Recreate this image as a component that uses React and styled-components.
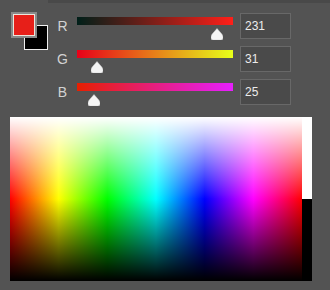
import React from "react";
import styled, { createGlobalStyle } from "styled-components";

const Global = createGlobalStyle`
  html, body { margin: 0; padding: 0; background: #535353; }
  body { font-family: "Liberation Sans", Arial, sans-serif; }
`;

const Page = styled.div`
  width: 330px;
  height: 290px;
  background: #535353;
  overflow: hidden;
`;

const TopBand = styled.div`
  height: 3px;
  margin-left: 48px;
  background: #494949;
`;

const Controls = styled.div`
  display: flex;
  align-items: flex-start;
  margin-top: 9px;
  padding-left: 11px;
`;

const SwatchStack = styled.div`
  position: relative;
  width: 37px;
  height: 38px;
  flex: none;
`;

const BackSwatch = styled.div`
  position: absolute;
  left: 13px;
  top: 13px;
  width: 24px;
  height: 25px;
  box-sizing: border-box;
  border: 1px solid #f0f0f0;
  background: #000;
`;

const FrontSwatch = styled.div`
  position: absolute;
  left: 0;
  top: 0;
  width: 26px;
  height: 26px;
  box-sizing: border-box;
  border: 2px solid #8a8a8a;
  box-shadow: inset 0 0 0 1px #ece6dc;
  background: ${(p) => p.$color};
`;

const Rows = styled.div`
  display: flex;
  flex-direction: column;
  gap: 7px;
  margin-top: 1px;
`;

const Row = styled.div`
  display: flex;
  height: 26px;
`;

const Label = styled.div`
  width: 29px;
  display: flex;
  align-items: center;
  justify-content: center;
  font-size: 14px;
  color: #d2d2d2;
`;

const SliderCol = styled.div`
  position: relative;
  width: 156px;
  padding-top: 4px;
`;

const Track = styled.div`
  height: 8px;
  background: linear-gradient(to right, ${(p) => p.$from}, ${(p) => p.$to});
`;

const Thumb = styled.svg`
  position: absolute;
  top: 15px;
  width: 12px;
  height: 12px;
  display: block;
`;

const ValueBox = styled.div`
  margin-left: 7px;
  width: 51px;
  height: 26px;
  box-sizing: border-box;
  border: 1px solid #686868;
  background: #4a4a4a;
  color: #ececec;
  font-size: 12px;
  display: flex;
  align-items: center;
  padding-left: 4px;
`;

const SpectrumArea = styled.div`
  display: flex;
  margin-top: 12px;
  margin-left: 10px;
  height: 164px;
`;

const Field = styled.div`
  width: 292px;
  height: 164px;
  background:
    linear-gradient(to bottom, #fff 0%, rgba(255,255,255,0) 50%, rgba(0,0,0,0) 50%, #000 100%),
    linear-gradient(to right, #f00 0%, #ff0 16.67%, #0f0 33.33%, #0ff 50%, #00f 66.67%, #f0f 83.33%, #f00 100%);
`;

const Strip = styled.div`
  width: 10px;
  display: flex;
  flex-direction: column;
`;

const StripPart = styled.div`
  flex: 1;
  background: ${(p) => p.$color};
`;

const color = { r: 231, g: 31, b: 25 };

const channels = [
  { key: "r", label: "R", from: `rgb(0,${color.g},${color.b})`, to: `rgb(255,${color.g},${color.b})` },
  { key: "g", label: "G", from: `rgb(${color.r},0,${color.b})`, to: `rgb(${color.r},255,${color.b})` },
  { key: "b", label: "B", from: `rgb(${color.r},${color.g},0)`, to: `rgb(${color.r},${color.g},255)` },
];

function ThumbIcon({ value }) {
  const center = 2 + (value / 255) * 152;
  return (
    <Thumb viewBox="0 0 12 12" style={{ left: `${center - 6}px` }}>
      <path
        d="M6 0.5 L10.8 6 Q12 7.3 12 9 L12 10 Q12 12 10 12 L2 12 Q0 12 0 10 L0 9 Q0 7.3 1.2 6 Z"
        fill="#f5f5f5"
        stroke="#cfcfcf"
        strokeWidth="0.5"
      />
    </Thumb>
  );
}

export default function App() {
  return (
    <Page>
      <Global />
      <TopBand />
      <Controls>
        <SwatchStack>
          <BackSwatch />
          <FrontSwatch $color={`rgb(${color.r},${color.g},${color.b})`} />
        </SwatchStack>
        <Rows>
          {channels.map((c) => (
            <Row key={c.key}>
              <Label>{c.label}</Label>
              <SliderCol>
                <Track $from={c.from} $to={c.to} />
                <ThumbIcon value={color[c.key]} />
              </SliderCol>
              <ValueBox>{color[c.key]}</ValueBox>
            </Row>
          ))}
        </Rows>
      </Controls>
      <SpectrumArea>
        <Field />
        <Strip>
          <StripPart $color="#ffffff" />
          <StripPart $color="#000000" />
        </Strip>
      </SpectrumArea>
    </Page>
  );
}
